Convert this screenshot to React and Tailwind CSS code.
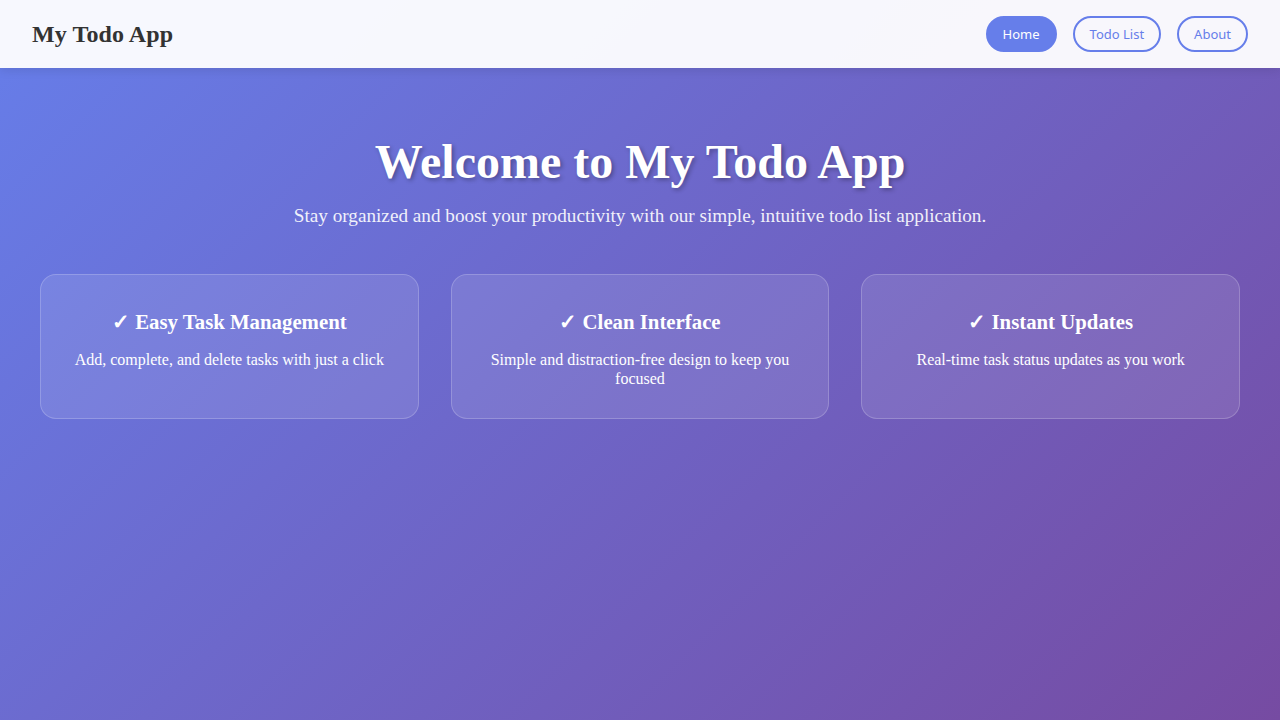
import React, { useState } from "react";

const features = [
  { title: "Easy Task Management", text: "Add, complete, and delete tasks with just a click" },
  { title: "Clean Interface", text: "Simple and distraction-free design to keep you focused" },
  { title: "Instant Updates", text: "Real-time task status updates as you work" },
];

const links = ["Home", "Todo List", "About"];

export default function App() {
  const [active, setActive] = useState("Home");

  return (
    <div className="min-h-screen flex flex-col bg-[linear-gradient(135deg,#667eea_0%,#764ba2_100%)] font-['Liberation_Serif',serif] text-white">
      <header className="h-[68px] flex items-center justify-between px-8 bg-white/95 shadow-[0_2px_10px_rgba(0,0,0,0.1)]">
        <h1 className="text-[24px] font-bold text-[#333] tracking-[0.1px]">My Todo App</h1>
        <nav className="flex gap-4">
          {links.map((l) => (
            <button
              key={l}
              onClick={() => setActive(l)}
              className={
                "h-9 px-[15px] pt-[2px] rounded-full border-2 border-[#667eea] text-[13px] font-['Noto_Sans',sans-serif] " +
                (active === l ? "bg-[#667eea] text-white" : "bg-transparent text-[#667eea]")
              }
            >
              {l}
            </button>
          ))}
        </nav>
      </header>

      <main className="w-full max-w-[1200px] mx-auto pt-[66px] pb-8">
        <section className="text-center">
          <h2 className="text-[48px] font-bold leading-[55px] [text-shadow:2px_2px_4px_rgba(0,0,0,0.3)]">
            Welcome to My Todo App
          </h2>
          <p className="mt-4 text-[19.2px] leading-[22px] opacity-90">
            Stay organized and boost your productivity with our simple, intuitive todo list application.
          </p>
        </section>

        <div className="mt-[47px] grid grid-cols-3 gap-8">
          {features.map((f) => (
            <div
              key={f.title}
              className="rounded-2xl border border-white/20 bg-white/10 px-[31px] pt-[31px] pb-[30px] text-center"
            >
              <h3 className="text-[20.8px] font-bold leading-8">✓ {f.title}</h3>
              <p className="mt-3 text-[16px] leading-[19px]">{f.text}</p>
            </div>
          ))}
        </div>
      </main>
    </div>
  );
}
